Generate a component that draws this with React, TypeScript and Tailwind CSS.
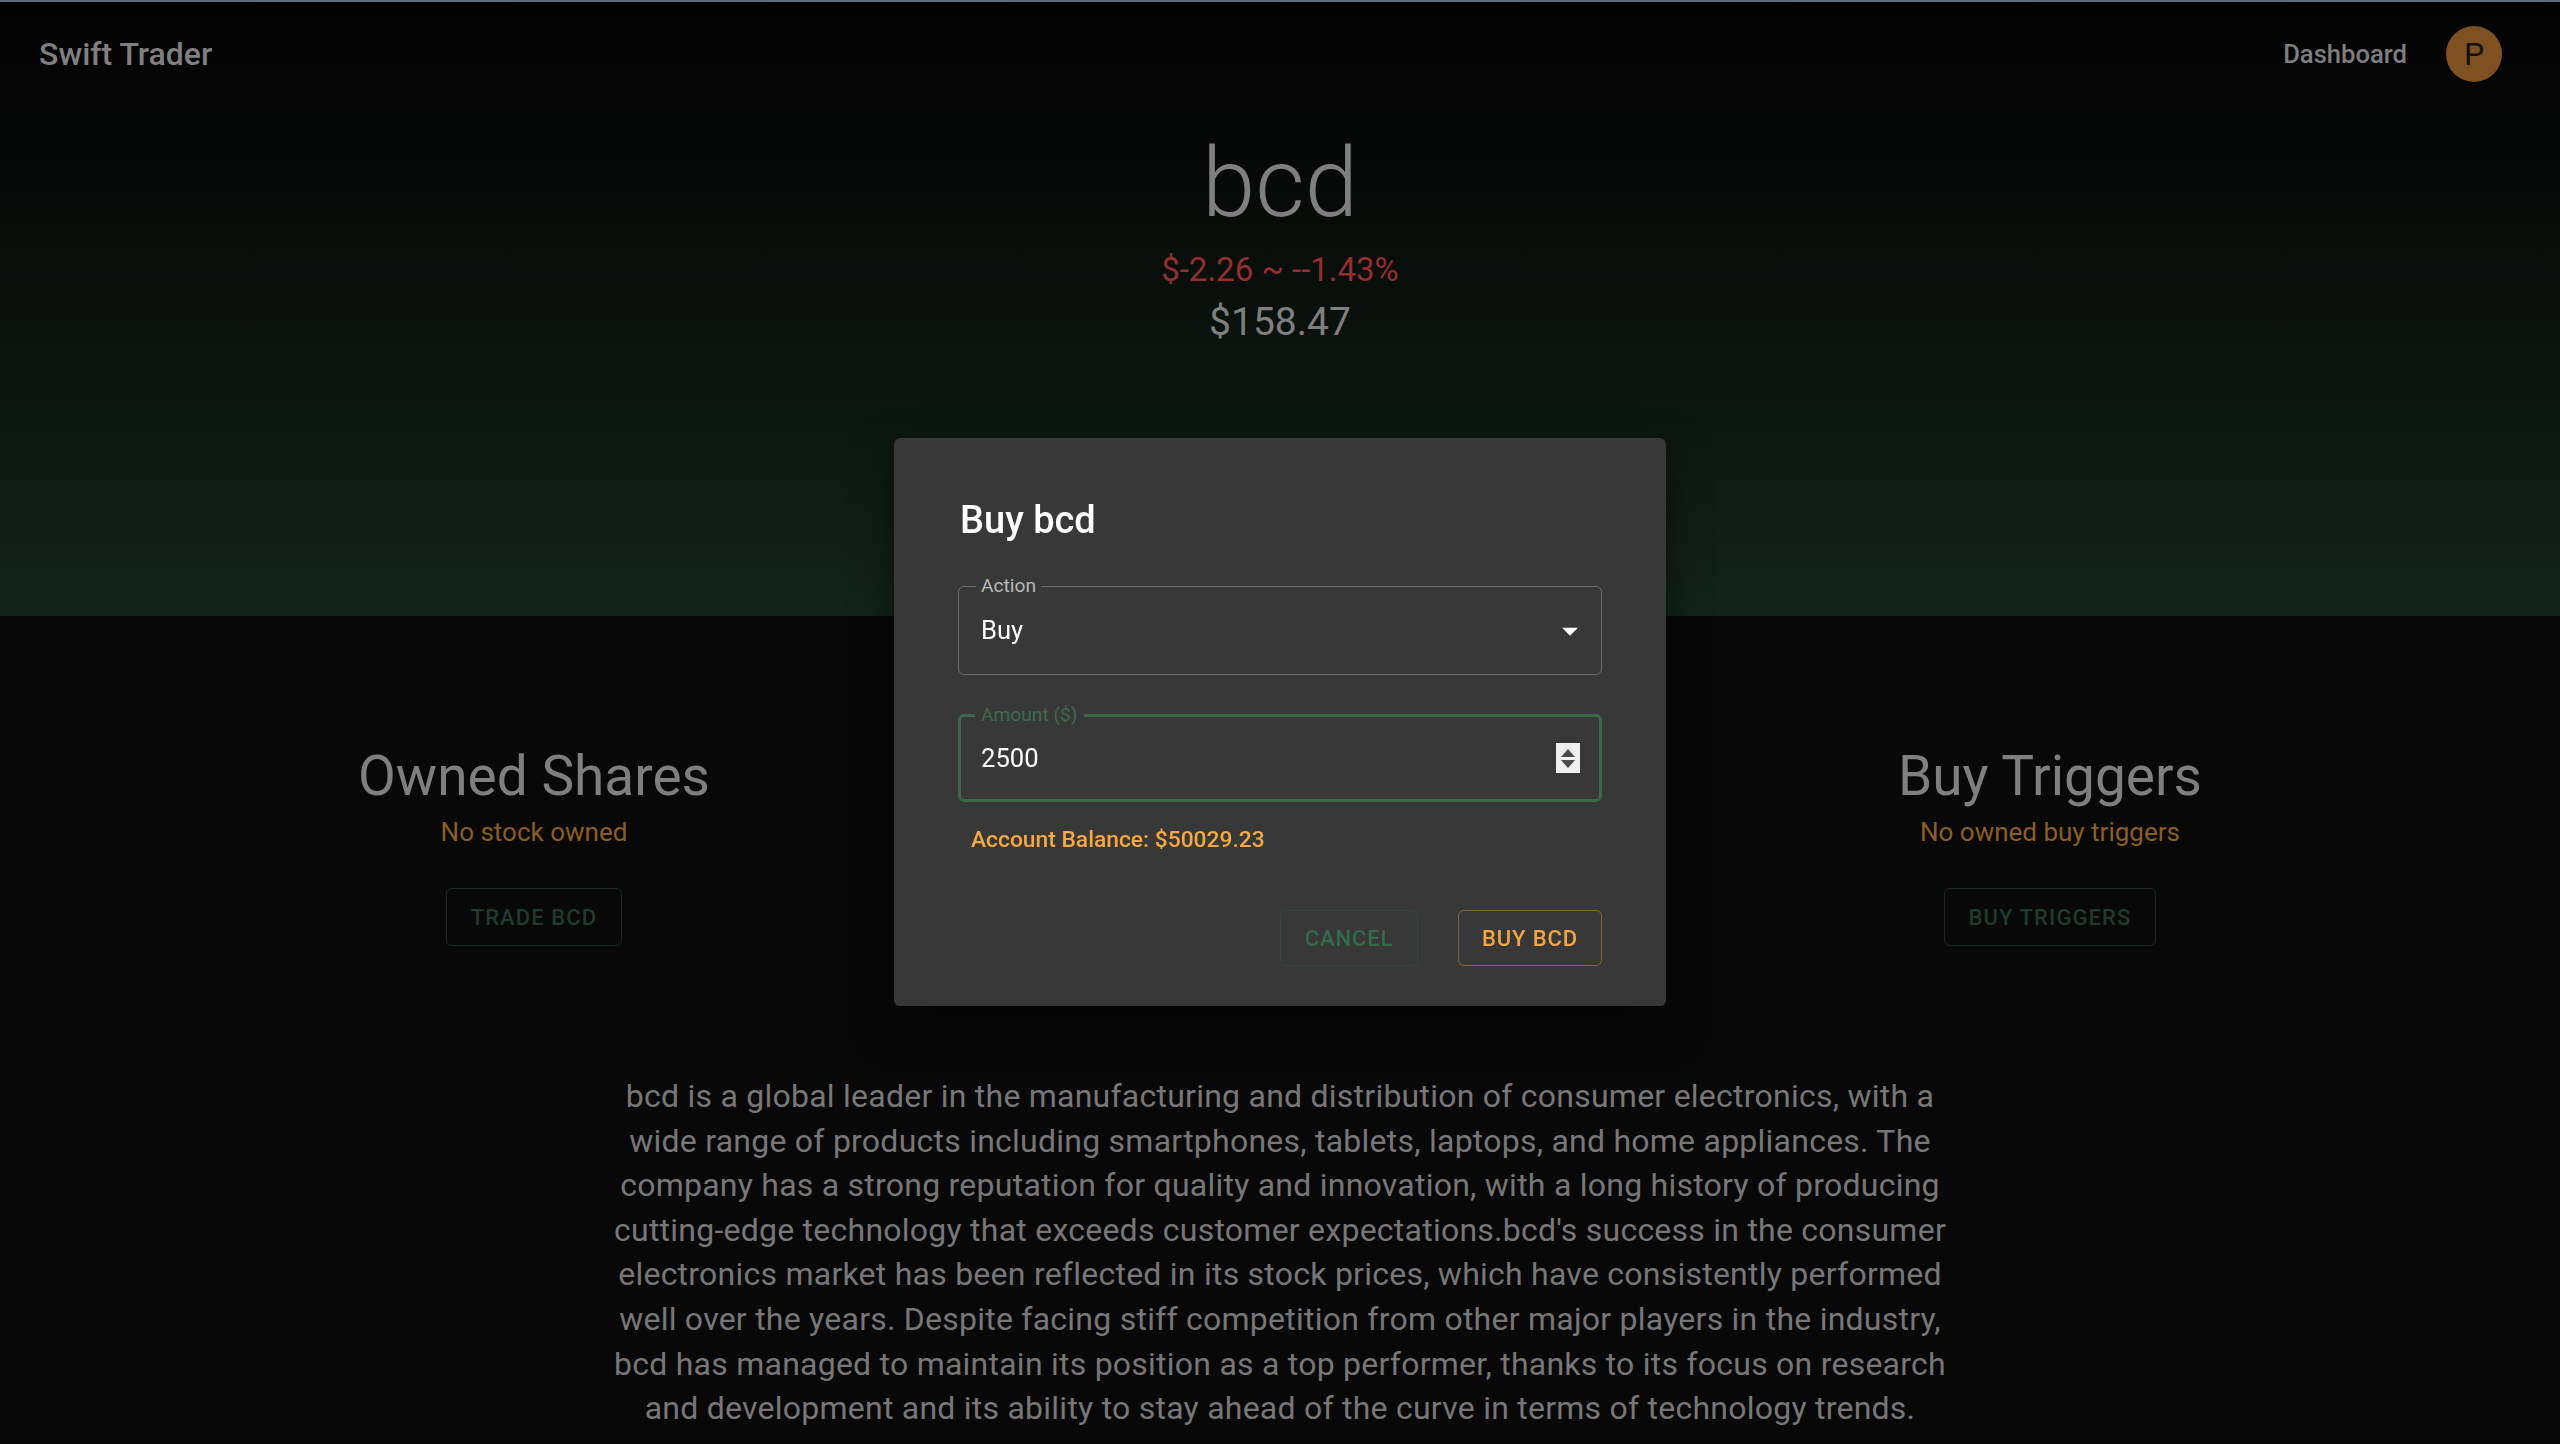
import { useState } from 'react';

const description =
  "bcd is a global leader in the manufacturing and distribution of consumer electronics, with a wide range of products including smartphones, tablets, laptops, and home appliances. The company has a strong reputation for quality and innovation, with a long history of producing cutting-edge technology that exceeds customer expectations.bcd's success in the consumer electronics market has been reflected in its stock prices, which have consistently performed well over the years. Despite facing stiff competition from other major players in the industry, bcd has managed to maintain its position as a top performer, thanks to its focus on research and development and its ability to stay ahead of the curve in terms of technology trends.";

interface SectionProps {
  title: string;
  empty: string;
  action: string;
}

function Section({ title, empty, action }: SectionProps) {
  return (
    <div className="flex flex-col items-center">
      <h2 className="text-[55px] leading-[67px] font-normal text-[#7f7f7f]">{title}</h2>
      <p className="mt-[3px] text-[26px] leading-[38px] text-[#8b5e22]">{empty}</p>
      <button className="mt-[37px] h-[58px] px-[24px] rounded-[6px] border border-[#1a2a21] text-[22px] font-medium tracking-[0.05em] text-[#1f3b2c] uppercase">
        {action}
      </button>
    </div>
  );
}

function ArrowDown() {
  return (
    <svg width="38" height="38" viewBox="0 0 24 24" className="fill-white">
      <path d="M7 10l5 5 5-5z" />
    </svg>
  );
}

function Spinner() {
  return (
    <div className="w-[24px] h-[30px] bg-[#efefef] flex flex-col items-center justify-center gap-[3px]">
      <svg width="14" height="8" viewBox="0 0 14 8" className="fill-[#4a4a4a]">
        <path d="M7 0l7 8H0z" />
      </svg>
      <svg width="14" height="8" viewBox="0 0 14 8" className="fill-[#4a4a4a]">
        <path d="M0 0h14L7 8z" />
      </svg>
    </div>
  );
}

function BuyDialog() {
  const [amount] = useState('2500');
  return (
    <div className="fixed inset-0 flex items-center justify-center">
      <div className="w-[772px] h-[568px] bg-[#383838] rounded-[6px] shadow-[0_18px_40px_rgba(0,0,0,0.5)] px-[64px] pt-[53px] flex flex-col">
        <h2 className="pl-[2px] text-[38px] leading-[59px] font-medium text-white">Buy bcd</h2>

        <div className="relative mt-[36px] h-[89px] rounded-[6px] border border-[#6c6c6c] flex items-center pl-[22px] pr-[12px]">
          <span className="absolute -top-[14px] left-[17px] px-[5px] bg-[#383838] text-[19.2px] leading-[26px] text-[#b9b9b9]">
            Action
          </span>
          <span className="flex-1 text-[25.6px] text-white">Buy</span>
          <ArrowDown />
        </div>

        <div className="relative mt-[39px] h-[88px] rounded-[6px] border-[3px] border-[#3b6a4a] flex items-center pl-[20px] pr-[19px]">
          <span className="absolute -top-[15px] left-[14px] px-[6px] bg-[#383838] text-[19.2px] leading-[26px] text-[#3d6b4c]">
            Amount ($)
          </span>
          <span className="flex-1 text-[25.6px] text-white">{amount}</span>
          <Spinner />
        </div>

        <p className="mt-[21px] pl-[13px] text-[22.8px] leading-[33px] font-medium text-[#f6a841]">
          Account Balance: $50029.23
        </p>

        <div className="mt-[54px] flex justify-end gap-[40px]">
          <button className="h-[56px] w-[138px] rounded-[6px] border border-[#30493b] text-[22px] font-medium tracking-[0.04em] text-[#336b4b]">
            CANCEL
          </button>
          <button className="h-[56px] w-[144px] rounded-[6px] border border-[#8b6434] text-[22px] font-medium tracking-[0.04em] text-[#f3a63f]">
            BUY BCD
          </button>
        </div>
      </div>
    </div>
  );
}

export default function App() {
  return (
    <div className="min-h-[1444px] bg-[#080808] font-[Roboto,sans-serif]">
      <div className="h-[616px] bg-gradient-to-b from-[#030303] to-[#13231a] flex flex-col">
        <div className="h-[2px] bg-[#5f6b75]" />
        <header className="h-[104px] flex items-center justify-between pl-[39px] pr-[58px]">
          <span className="text-[32px] font-medium text-[#7f7f7f]">Swift Trader</span>
          <div className="flex items-center gap-[39px]">
            <span className="text-[25.6px] font-medium text-[#7e7e7e]">Dashboard</span>
            <div className="w-[56px] h-[56px] rounded-full bg-[#7f5120] flex items-center justify-center text-[32px] text-[#111]">
              P
            </div>
          </div>
        </header>
        <div className="flex flex-col items-center">
          <h1 className="mt-[20px] text-[96px] leading-[115px] font-light text-[#7f7f7f]">bcd</h1>
          <p className="mt-[10px] text-[33px] leading-[38px] text-[#962e2e]">$-2.26 ~ --1.43%</p>
          <p className="mt-[10px] text-[39px] leading-[46px] text-[#7f7f7f]">$158.47</p>
        </div>
      </div>

      <div className="mt-[127px] flex justify-evenly">
        <Section title="Owned Shares" empty="No stock owned" action="Trade bcd" />
        {/* middle column sits behind the dialog */}
        <div className="w-[472px]" />
        <Section title="Buy Triggers" empty="No owned buy triggers" action="Buy triggers" />
      </div>

      <p className="mx-auto mt-[128px] w-[1344px] text-center text-[32px] leading-[44.6px] tracking-[0.24px] text-[#777777]">
        {description}
      </p>

      <BuyDialog />
    </div>
  );
}
